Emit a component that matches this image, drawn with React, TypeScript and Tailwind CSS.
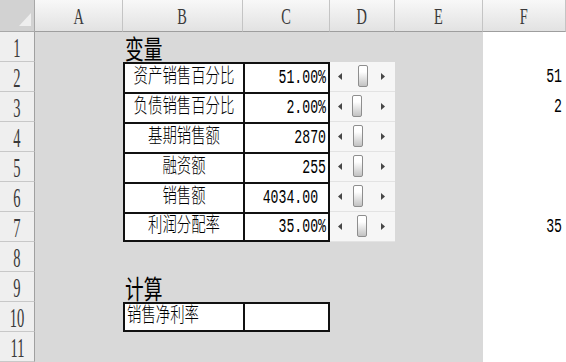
import React from 'react';

interface Variable {
  label: string;
  value: string;
  thumb: number;
  linked?: string;
}

const variables: Variable[] = [
  { label: '资产销售百分比', value: '51.00%', thumb: 28, linked: '51' },
  { label: '负债销售百分比', value: '2.00%', thumb: 22, linked: '2' },
  { label: '基期销售额', value: '2870', thumb: 23 },
  { label: '融资额', value: '255', thumb: 23 },
  { label: '销售额', value: '4034.00 ', thumb: 23 },
  { label: '利润分配率', value: '35.00%', thumb: 27, linked: '35' },
];

function Corner() {
  return (
    <div className="relative bg-[#d2d2d2] border-r border-b border-[#a8a8a8]">
      <svg className="absolute right-[3px] bottom-[5px]" width="12" height="13" viewBox="0 0 12 13">
        <path d="M12 0 L12 13 L0 13 Z" fill="#eeeeee" />
      </svg>
    </div>
  );
}

function ColHeader({ label }: { label: string }) {
  return (
    <div className="flex items-center justify-center bg-gradient-to-b from-[#f8f8f8] to-[#e2e2e2] border-r border-r-[#c4c4c4] border-b border-b-[#9e9e9e] text-[#3a3a3a] font-['Liberation_Serif',serif]">
      <span className="inline-block text-[24px] leading-none scale-x-[0.6]">{label}</span>
    </div>
  );
}

function RowHeader({ n }: { n: number }) {
  return (
    <div className="flex items-center justify-center bg-[#efefef] border-b border-b-[#c8c8c8] border-r border-r-[#a0a0a0] text-[#3a3a3a] font-['Liberation_Serif',serif]">
      <span className="inline-block text-[28px] leading-none scale-x-[0.52] pt-[2px]">{n}</span>
    </div>
  );
}

function Gray() {
  return <div className="bg-[#d9d9d9]" />;
}

function White({ children }: { children?: React.ReactNode }) {
  return (
    <div className="bg-white flex items-center justify-end pr-[4px]">
      {children && (
        <span className="inline-block text-[20px] leading-none scale-x-[0.66] origin-right">{children}</span>
      )}
    </div>
  );
}

function Heading({ text }: { text: string }) {
  return (
    <div className="bg-[#d9d9d9] flex items-end pl-[2px]">
      <span className="inline-block text-[26px] leading-[26px] scale-x-[0.72] origin-left translate-y-[3px] whitespace-nowrap">
        {text}
      </span>
    </div>
  );
}

function Arrow({ dir }: { dir: 'left' | 'right' }) {
  return (
    <svg width="4" height="7" viewBox="0 0 4 7">
      <path d={dir === 'left' ? 'M4 0 L0 3.5 L4 7 Z' : 'M0 0 L4 3.5 L0 7 Z'} fill="#474747" />
    </svg>
  );
}

function ScrollBar({ thumb }: { thumb: number }) {
  return (
    <div className="relative flex items-center justify-between pl-[8px] pr-[10px] bg-[#f6f6f6] border-b border-[#e3e3e3]">
      <Arrow dir="left" />
      <div
        className="absolute top-[3px] bottom-[4px] w-[10px] rounded-[2px] border border-[#8e8e8e] bg-gradient-to-b from-white from-30% to-[#c2c2c2]"
        style={{ left: thumb }}
      />
      <Arrow dir="right" />
    </div>
  );
}

export default function App() {
  return (
    <div className="w-[566px] h-[362px] overflow-hidden bg-white text-black font-['Liberation_Mono','Noto_Sans_CJK_SC',monospace]">
      <div className="grid grid-cols-[35px_88px_120px_87px_65px_88px_83px] grid-rows-[32px_repeat(11,30px)]">
        <Corner />
        {['A', 'B', 'C', 'D', 'E', 'F'].map((c) => (
          <ColHeader key={c} label={c} />
        ))}

        <RowHeader n={1} />
        <Gray />
        <Heading text="变量" />
        <Gray />
        <Gray />
        <Gray />
        <White />

        {variables.map((v, i) => {
          const last = i === variables.length - 1;
          return (
            <React.Fragment key={v.label}>
              <RowHeader n={i + 2} />
              <Gray />
              <div className={`bg-white flex items-center justify-center border-l-2 border-t-2 border-[#111] ${last ? 'border-b-2' : ''}`}>
                <span className="inline-block text-[20px] font-light leading-none scale-x-[0.72] whitespace-nowrap">{v.label}</span>
              </div>
              <div className={`bg-white flex items-center justify-end pr-[2px] border-l-2 border-r-2 border-t-2 border-[#111] ${last ? 'border-b-2' : ''}`}>
                <span className="inline-block text-[20px] leading-none scale-x-[0.66] origin-right whitespace-pre">{v.value}</span>
              </div>
              <ScrollBar thumb={v.thumb} />
              <Gray />
              <White>{v.linked}</White>
            </React.Fragment>
          );
        })}

        <RowHeader n={8} />
        <Gray />
        <Gray />
        <Gray />
        <Gray />
        <Gray />
        <White />

        <RowHeader n={9} />
        <Gray />
        <Heading text="计算" />
        <Gray />
        <Gray />
        <Gray />
        <White />

        <RowHeader n={10} />
        <Gray />
        <div className="bg-white flex items-center pl-[2px] border-l-2 border-t-2 border-b-2 border-[#111]">
          <span className="inline-block text-[20px] font-light leading-none scale-x-[0.72] origin-left whitespace-nowrap">销售净利率</span>
        </div>
        <div className="bg-white border-2 border-[#111]" />
        <Gray />
        <Gray />
        <White />

        <RowHeader n={11} />
        <Gray />
        <Gray />
        <Gray />
        <Gray />
        <Gray />
        <White />
      </div>
    </div>
  );
}
